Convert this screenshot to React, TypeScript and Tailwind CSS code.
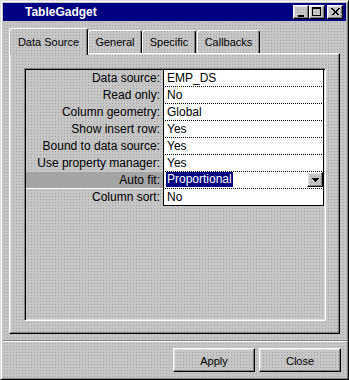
import clsx from "clsx";

const rows: [string, string][] = [
  ["Data source:", "EMP_DS"],
  ["Read only:", "No"],
  ["Column geometry:", "Global"],
  ["Show insert row:", "Yes"],
  ["Bound to data source:", "Yes"],
  ["Use property manager:", "Yes"],
  ["Auto fit:", "Proportional"],
  ["Column sort:", "No"],
];

// dithered grey of the old desktop theme
const stipple =
  "bg-[#c6c6c6] bg-[conic-gradient(at_1px_1px,transparent_75%,#a2a2a2_0)] bg-[length:3px_3px]";

const raised =
  "border border-t-white border-l-white border-r-black border-b-black shadow-[inset_-1px_-1px_#808080,inset_1px_1px_#dfdfdf]";

const TitleButton = ({ kind }: { kind: "min" | "max" | "close" }) => (
  <div className={clsx("w-[16px] h-[14px] relative", raised, stipple)}>
    <svg width="14" height="12" viewBox="0 0 14 12" className="absolute left-0 top-0" shapeRendering="crispEdges">
      {kind === "min" && <rect x="4" y="9" width="6" height="2" fill="#000" />}
      {kind === "max" && (
        <>
          <rect x="2" y="1" width="9" height="2" fill="#000" />
          <rect x="2" y="1" width="1" height="9" fill="#000" />
          <rect x="10" y="1" width="1" height="9" fill="#000" />
          <rect x="2" y="9" width="9" height="1" fill="#000" />
        </>
      )}
      {kind === "close" && (
        <path d="M3.5 2.5 L10.5 9.5 M4.5 2.5 L11.5 9.5 M10.5 2.5 L3.5 9.5 M11.5 2.5 L4.5 9.5" stroke="#000" strokeWidth="1" />
      )}
    </svg>
  </div>
);

const Tab = ({ label, w, active }: { label: string; w: string; active?: boolean }) => (
  <div
    className={clsx(
      stipple,
      "border-t border-l border-white border-r border-r-black shadow-[inset_-1px_0_#808080] rounded-t-[3px] text-center text-[11px] leading-[14px] text-black",
      w,
      active ? "h-[27px] -mb-[2px] pt-[6px] relative z-10" : "h-[23px] pt-[4px]"
    )}
  >
    {label}
  </div>
);

export default function App() {
  return (
    <div
      className={clsx(
        stipple,
        "w-[349px] h-[380px] border border-t-[#dfdfdf] border-l-[#dfdfdf] border-r-black border-b-black shadow-[inset_1px_1px_white,inset_-1px_-1px_#808080] p-[2px] flex flex-col font-['Liberation_Sans',Arial,sans-serif] text-black"
      )}
    >
      <div className="h-[18px] bg-[#000080] flex items-start">
        <span className="pl-[22px] leading-[18px] text-[12px] font-bold text-white flex-1">TableGadget</span>
        <div className="flex pt-[2px] pr-[3px]">
          <TitleButton kind="min" />
          <TitleButton kind="max" />
          <div className="w-[2px]" />
          <TitleButton kind="close" />
        </div>
      </div>

      <div className="mt-[7px] ml-[6px] flex items-end h-[25px]">
        <Tab label="Data Source" w="w-[79px]" active />
        <Tab label="General" w="w-[54px]" />
        <Tab label="Specific" w="w-[54px]" />
        <div className="w-[1px]" />
        <Tab label="Callbacks" w="w-[63px]" />
      </div>

      <div className="mx-[6px] h-[281px] border border-t-white border-l-white border-r-black border-b-black shadow-[inset_-1px_-1px_#808080,inset_1px_1px_#dfdfdf]">
        <div className="ml-[14px] mt-[14px] w-[302px] h-[253px] border border-t-[#808080] border-l-[#808080] border-r-white border-b-white shadow-[inset_1px_1px_black,inset_-1px_-1px_#dfdfdf] p-px">
          {rows.map(([label, value], i) => {
            const active = label === "Auto fit:";
            const last = i === rows.length - 1;
            return (
              <div key={label} className="flex h-[17px] text-[12px] leading-[16px]">
                <div
                  className={clsx(
                    "w-[137px] h-[17px] pr-[3px] text-right",
                    active && "bg-[#a4a4a4] border-b border-white"
                  )}
                >
                  {label}
                </div>
                <div
                  className={clsx(
                    "w-[161px] h-[17px] bg-white border-x border-black border-b border-b-black flex items-start",
                    !last && "[border-bottom-style:dotted]"
                  )}
                >
                  {active ? (
                    <>
                      <span className="ml-[2px] px-[1px] h-[15px] leading-[15px] bg-[#000080] text-white">{value}</span>
                      <div className={clsx("ml-auto w-[16px] h-[15px] flex items-center justify-center", raised, stipple)}>
                        <svg width="7" height="4" viewBox="0 0 7 4" shapeRendering="crispEdges">
                          <path d="M0 0 H7 L3.5 4 Z" fill="#000" />
                        </svg>
                      </div>
                    </>
                  ) : (
                    <span className="pl-[3px]">{value}</span>
                  )}
                </div>
              </div>
            );
          })}
        </div>
      </div>

      <div className="mt-[6px] h-[2px] border-t border-t-[#808080] border-b border-b-white" />

      <div className="mt-[6px] flex justify-end gap-[4px] pr-[5px]">
        <button type="button" className={clsx("w-[82px] h-[24px] text-[11px] pt-[2px]", raised, stipple)}>
          Apply
        </button>
        <button type="button" className={clsx("w-[82px] h-[24px] text-[11px] pt-[2px]", raised, stipple)}>
          Close
        </button>
      </div>
    </div>
  );
}
